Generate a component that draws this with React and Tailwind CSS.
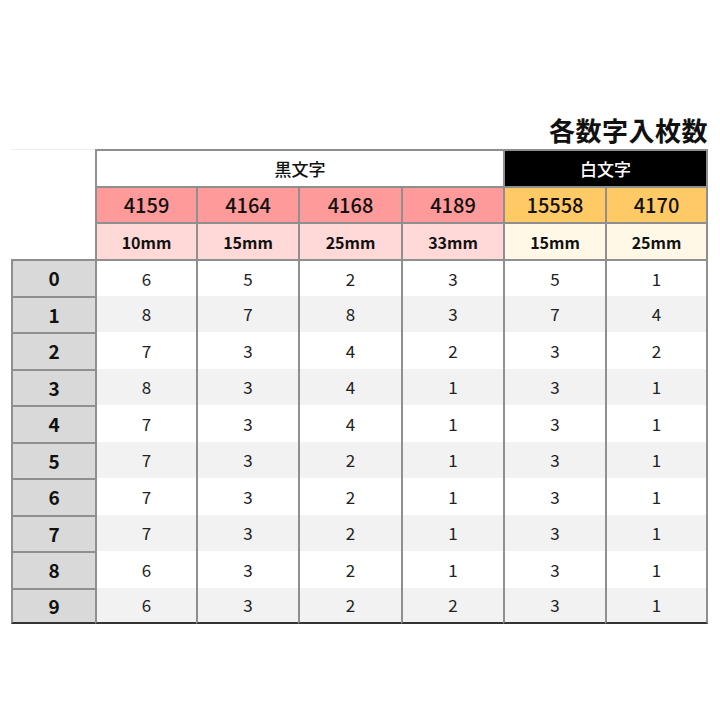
import React from "react";

const codes = [
  { code: "4159", mm: "10mm", t: "red" },
  { code: "4164", mm: "15mm", t: "red" },
  { code: "4168", mm: "25mm", t: "red" },
  { code: "4189", mm: "33mm", t: "red" },
  { code: "15558", mm: "15mm", t: "yel" },
  { code: "4170", mm: "25mm", t: "yel" },
];

const data = [
  [6, 5, 2, 3, 5, 1],
  [8, 7, 8, 3, 7, 4],
  [7, 3, 4, 2, 3, 2],
  [8, 3, 4, 1, 3, 1],
  [7, 3, 4, 1, 3, 1],
  [7, 3, 2, 1, 3, 1],
  [7, 3, 2, 1, 3, 1],
  [7, 3, 2, 1, 3, 1],
  [6, 3, 2, 1, 3, 1],
  [6, 3, 2, 2, 3, 1],
];

const font = { fontFamily: '"Noto Sans CJK JP", "Noto Sans", sans-serif' };

export default function App() {
  return (
    <div className="w-[720px] h-[720px] bg-white pt-[113px]" style={font}>
      <div className="w-[697px] ml-[11px] flex justify-end h-[34px] items-center">
        <span className="text-[26px] font-bold text-[#111] leading-none tracking-[0.5px]">各数字入枚数</span>
      </div>
      <div className="ml-[11px] mt-[2px] grid grid-cols-[84px_101px_102px_103px_102px_102px_103px] grid-rows-[37px_36px_37px_repeat(10,36.5px)] w-[697px]">
        {/* row 1 */}
        <div className="border-t border-[#efefef]" />
        <div className="col-span-4 bg-white border-t-2 border-l-2 border-[#8f8f8f] flex items-center justify-center text-[17px] font-medium text-[#111]">
          黒文字
        </div>
        <div className="col-span-2 bg-black border-t-2 border-l-2 border-r-2 border-[#8f8f8f] flex items-center justify-center text-[17px] font-medium text-white">
          白文字
        </div>
        {/* row 2 */}
        <div />
        {codes.map((c, i) => (
          <div
            key={"c" + i}
            className={
              "border-t-2 border-l-2 border-[#8f8f8f] flex items-center justify-center text-[20px] font-medium text-[#111] " +
              (c.t === "red" ? "bg-[#ff9a9a]" : "bg-[#ffc966]") +
              (i === 5 ? " border-r-2" : "")
            }
          >
            {c.code}
          </div>
        ))}
        {/* row 3 */}
        <div />
        {codes.map((c, i) => (
          <div
            key={"m" + i}
            className={
              "border-t-2 border-l-2 border-[#8f8f8f] flex items-center justify-center text-[16px] font-bold text-[#111] " +
              (c.t === "red" ? "bg-[#ffd8d8]" : "bg-[#fff8e6]") +
              (i === 5 ? " border-r-2" : "")
            }
          >
            {c.mm}
          </div>
        ))}
        {/* data */}
        {data.map((row, r) => (
          <React.Fragment key={"r" + r}>
            <div
              className={
                "bg-[#d9d9d9] border-t-2 border-l-2 border-[#8f8f8f] flex items-center justify-center text-[19px] font-bold text-[#111]" +
                (r === 9 ? " border-b-2 border-b-[#333]" : "")
              }
            >
              {r}
            </div>
            {row.map((v, i) => (
              <div
                key={"d" + r + "-" + i}
                className={
                  "border-l-2 border-[#8f8f8f] flex items-center justify-center text-[17px] font-normal text-[#222] " +
                  (r % 2 === 0 ? "bg-white" : "bg-[#f2f2f2]") +
                  (r === 0 ? " border-t-2" : "") +
                  (i === 5 ? " border-r-2" : "") +
                  (r === 9 ? " border-b-2 border-b-[#333]" : "")
                }
              >
                {v}
              </div>
            ))}
          </React.Fragment>
        ))}
      </div>
    </div>
  );
}
